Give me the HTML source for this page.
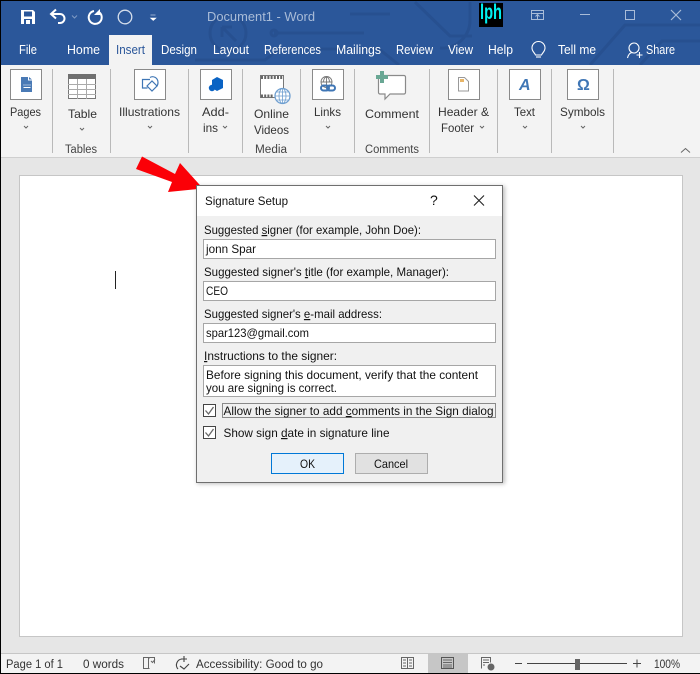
<!DOCTYPE html>
<html><head><meta charset="utf-8"><title>Signature Setup</title>
<style>
html,body{margin:0;padding:0;background:#000;width:700px;height:674px;overflow:hidden}
svg{display:block}
text{font-family:"Liberation Sans",sans-serif;font-size:12px;fill:#222}
.t{fill:#fff;font-size:12.5px}
.d{fill:#111}
.r{fill:#333}
.ic{fill:none;stroke:#3f76b5;stroke-width:1.2}
.box{fill:#fff;stroke:#8a8a8a;stroke-width:1}
.ch{fill:none;stroke:#666;stroke-width:1}
.f{fill:#fff;stroke:#a6a6a6;stroke-width:1}
.sep{stroke:#b9b9b9;stroke-width:1}
</style></head><body>
<svg width="700" height="674" viewBox="0 0 700 674" xmlns="http://www.w3.org/2000/svg">
<defs><filter id="s" x="-5%" y="-5%" width="110%" height="110%"><feGaussianBlur stdDeviation="2"/></filter></defs>
<rect width="700" height="674" fill="#000"/>
<rect x="1" y="1" width="699" height="64" fill="#2b579a"/>
<g fill="none" stroke="#275090" stroke-width="3">
<circle cx="228" cy="33" r="18"/><path d="M222 27h10M222 27v10M222 27l14 14"/>
<path d="M274 33h90M195 60h70l14-11h100l20 16"/><circle cx="274" cy="33" r="3"/>
<path d="M415 2l35 34h22M350 14h40M470 2v18a28 28 0 0 1-30 28"/>
<path d="M590 65l35-40h75M640 65l22-24h38"/>
</g>
<!-- QAT -->
<path d="M21 10h12l2 2v12H21z" fill="#fff"/>
<rect x="24" y="11.500" width="8" height="5" fill="#2b579a"/><rect x="24" y="19" width="8" height="5" fill="#2b579a"/><rect x="26" y="20" width="4" height="4" fill="#fff"/>
<g fill="none" stroke="#fff" stroke-width="2">
<path d="M52 14h8a4.500 4.500 0 0 1 0 9h-2"/><path d="M56 9.500l-5 4.500 5 4.500"/>
<path d="M99.500 12.500a6.500 6.500 0 1 1-5.500-1.500"/>
</g>
<path d="M100 9v6h-6z" fill="#fff"/>
<path d="M72 15.500l2.500 2.500 2.500-2.500" fill="none" stroke="#7f9ac4"/>
<circle cx="125" cy="17" r="6.800" fill="none" stroke="#d5deeb" stroke-width="1.300"/>
<path d="M150.500 15h5M150.500 18h5.500l-2.750 2.500z" fill="#fff" stroke="#fff" stroke-width=".6"/>
<text x="207" y="21" textLength="108" lengthAdjust="spacingAndGlyphs" style="fill:#a9bcd8;font-size:12.500px">Document1  -  Word</text>
<!-- logo -->
<rect x="479" y="3" width="24" height="24" fill="#000"/>
<text x="480" y="19" textLength="22" lengthAdjust="spacingAndGlyphs" style="fill:#00f0f0;font-size:21px;font-weight:bold">lph</text>
<!-- window controls -->
<g fill="none" stroke="#a9bcd8" stroke-width="1">
<rect x="531.500" y="10.500" width="12" height="9"/><path d="M531.500 13.500h12M537.500 19v-4M535.500 16.500l2-2 2 2"/>
<path d="M580 14.500h10"/><rect x="625.500" y="10.500" width="9" height="9"/>
<path d="M671 10l10 10M681 10l-10 10" stroke-width="1.200"/></g>
<!-- tabs -->
<rect x="109" y="35" width="43" height="31" fill="#f3f3f3"/>
<text class="t" x="19" y="54" textLength="18" lengthAdjust="spacingAndGlyphs">File</text>
<text class="t" x="67" y="54" textLength="33" lengthAdjust="spacingAndGlyphs">Home</text>
<text x="116" y="54" textLength="29" lengthAdjust="spacingAndGlyphs" style="fill:#2b579a;font-size:12.500px">Insert</text>
<text class="t" x="161" y="54" textLength="36" lengthAdjust="spacingAndGlyphs">Design</text>
<text class="t" x="213" y="54" textLength="36" lengthAdjust="spacingAndGlyphs">Layout</text>
<text class="t" x="264" y="54" textLength="57" lengthAdjust="spacingAndGlyphs">References</text>
<text class="t" x="336" y="54" textLength="45" lengthAdjust="spacingAndGlyphs">Mailings</text>
<text class="t" x="396" y="54" textLength="37" lengthAdjust="spacingAndGlyphs">Review</text>
<text class="t" x="448" y="54" textLength="25" lengthAdjust="spacingAndGlyphs">View</text>
<text class="t" x="488" y="54" textLength="25" lengthAdjust="spacingAndGlyphs">Help</text>
<text class="t" x="558" y="54" textLength="38" lengthAdjust="spacingAndGlyphs">Tell me</text>
<text class="t" x="646" y="54" textLength="29" lengthAdjust="spacingAndGlyphs">Share</text>
<g fill="none" stroke="#fff" stroke-width="1.100">
<path d="M535.500 55c-1-2.500-3.500-3.500-3.500-7a6.500 6.500 0 0 1 13 0c0 3.500-2.500 4.500-3.500 7z"/><path d="M536 57h5"/>
<circle cx="634" cy="48" r="5"/><path d="M627.500 58c1-4 3-5.500 5-5.500M636.500 55h6M639.500 52v6"/>
</g>
<!-- ribbon -->
<rect x="1" y="65" width="699" height="92" fill="#f3f3f3"/>
<rect x="1" y="157" width="699" height="1" fill="#cfcfcf"/>
<g class="sep"><path d="M52.500 69v84M110.500 69v84M188.500 69v84M242.500 69v84M300.500 69v84M354.500 69v84M429.500 69v84M497.500 69v84M551.500 69v84M613.500 69v84"/></g>
<rect class="box" x="10.500" y="69.500" width="31" height="30"/>
<rect class="box" x="134.500" y="69.500" width="31" height="30"/>
<rect class="box" x="200.500" y="69.500" width="31" height="30"/>
<rect class="box" x="312.500" y="69.500" width="31" height="30"/>
<rect class="box" x="448.500" y="69.500" width="31" height="30"/>
<rect class="box" x="509.500" y="69.500" width="31" height="30"/>
<rect class="box" x="567.500" y="69.500" width="31" height="30"/>
<!-- pages -->
<path d="M21 77h7v3.500h4V92H21z" fill="#4a7ab5"/><path d="M29 77l3 2.500h-3z" fill="#4a7ab5"/><path d="M23.500 85h7" stroke="#fff" stroke-dasharray="1 1"/><path d="M23.500 87.500h7" stroke="#fff"/>
<!-- table -->
<rect x="68.500" y="74.500" width="27" height="24" fill="#fff" stroke="#777"/><rect x="68" y="74" width="28" height="5" fill="#6f6f6f"/>
<path d="M77.500 79v20M86.500 79v20M68 84.500h28M68 89.500h28M68 94.500h28" stroke="#aaa" fill="none"/>
<!-- illustrations -->
<g class="ic"><path d="M150 79.500h-7.500v8.500h5"/><path d="M150 77.500c3-2 8 0 8 5 0 2-.5 3-1.500 4"/><path d="M147 86l5-5 5 5-5 5z"/></g>
<!-- add-ins -->
<path d="M217 77l6 3v8l-6 3-5-3v-8z" fill="#0a63c4"/><circle cx="212" cy="88" r="3.200" fill="#0a63c4"/>
<!-- video -->
<rect x="260.500" y="75.500" width="23" height="22" fill="#fff" stroke="#777"/>
<path d="M261 77.500h22M261 96h12" stroke="#666" stroke-width="3" stroke-dasharray="2 1.200" fill="none"/>
<circle cx="282.500" cy="96" r="7.500" fill="#fff" stroke="#6f9fd0" stroke-width="1.300"/>
<path d="M275 96h15M277 92h11M277 100h11M282.500 88.500v15M279 96c0-5 2-7.500 3.500-7.500s3.500 2.500 3.500 7.500-2 7.500-3.500 7.500-3.500-2.500-3.500-7.500" fill="none" stroke="#6f9fd0" stroke-width=".8"/>
<!-- links -->
<g fill="none" stroke="#777" stroke-width=".9"><circle cx="326.500" cy="82" r="5.500"/><path d="M321 82h11M326.500 76.500v11M323.500 82c0-3 1.500-5 3-5s3 2 3 5"/></g>
<g fill="none" stroke="#3f76b5" stroke-width="2"><rect x="321" y="85.500" width="8" height="5" rx="2.500"/><rect x="327" y="85.500" width="8" height="5" rx="2.500"/></g>
<!-- comment -->
<path d="M380 75.500h24a1.500 1.500 0 0 1 1.500 1.500v15.500a1.500 1.500 0 0 1-1.500 1.500h-14l-5 5v-5H380a1.500 1.500 0 0 1-1.500-1.500V78" fill="#fff" stroke="#8a8a8a" stroke-width="1.200"/>
<path d="M382 71v12M376 77h12" stroke="#69a794" stroke-width="4" fill="none"/>
<!-- header -->
<path d="M458.500 77.500h6l4 4v9.500h-10z" fill="#fff" stroke="#999"/><rect x="460" y="79" width="4" height="3" fill="#e8b567"/>
<!-- text A, omega -->
<text x="519" y="90" style="fill:#3f76b5;font-size:16px;font-weight:bold;font-style:italic">A</text>
<text x="577" y="90" style="fill:#3f76b5;font-size:16px;font-weight:bold">Ω</text>
<!-- ribbon labels -->
<text class="r" x="10" y="116" textLength="31" lengthAdjust="spacingAndGlyphs">Pages</text>
<text class="r" x="68" y="118" textLength="29" lengthAdjust="spacingAndGlyphs">Table</text>
<text class="r" x="119" y="116" textLength="61" lengthAdjust="spacingAndGlyphs">Illustrations</text>
<text class="r" x="202" y="116" textLength="27" lengthAdjust="spacingAndGlyphs">Add-</text>
<text class="r" x="203" y="132" textLength="15" lengthAdjust="spacingAndGlyphs">ins</text>
<text class="r" x="254" y="118" textLength="35" lengthAdjust="spacingAndGlyphs">Online</text>
<text class="r" x="254" y="134" textLength="35" lengthAdjust="spacingAndGlyphs">Videos</text>
<text class="r" x="314" y="116" textLength="27" lengthAdjust="spacingAndGlyphs">Links</text>
<text class="r" x="365" y="118" textLength="54" lengthAdjust="spacingAndGlyphs">Comment</text>
<text class="r" x="438" y="116" textLength="51" lengthAdjust="spacingAndGlyphs">Header &amp;</text>
<text class="r" x="441" y="132" textLength="33" lengthAdjust="spacingAndGlyphs">Footer</text>
<text class="r" x="514" y="116" textLength="21" lengthAdjust="spacingAndGlyphs">Text</text>
<text class="r" x="560" y="116" textLength="45" lengthAdjust="spacingAndGlyphs">Symbols</text>
<text x="65" y="153" textLength="32" lengthAdjust="spacingAndGlyphs" style="fill:#444;font-size:11.500px">Tables</text>
<text x="255" y="153" textLength="32" lengthAdjust="spacingAndGlyphs" style="fill:#444;font-size:11.500px">Media</text>
<text x="365" y="153" textLength="54" lengthAdjust="spacingAndGlyphs" style="fill:#444;font-size:11.500px">Comments</text>
<g class="ch"><path d="M24 126l2 2 2-2M80 128l2 2 2-2M148 126l2 2 2-2M223 126l2 2 2-2M326 126l2 2 2-2M480 126l2 2 2-2M523 126l2 2 2-2M581 126l2 2 2-2M681 152.500l4.500-4 4.500 4"/></g>
<!-- doc area -->
<rect x="1" y="158" width="699" height="495" fill="#e6e6e6"/>
<rect x="19.500" y="175.500" width="663" height="461" fill="#fff" stroke="#c6c6c6"/>
<rect x="115" y="271" width="1" height="18" fill="#222"/>
<!-- dialog -->
<rect x="197" y="186" width="308" height="298" fill="#000" opacity=".25" filter="url(#s)"/>
<!-- arrow -->
<polygon points="142,156.500 136,169 172,182 168,192 203,188.500 180,163 175,174" fill="#fb0007"/>
<rect x="196.500" y="185.500" width="306" height="297" fill="#f0f0f0" stroke="#6f6f6f"/>
<rect x="197" y="186" width="305" height="30" fill="#fff"/>
<text class="d" x="205" y="205" textLength="83" lengthAdjust="spacingAndGlyphs">Signature Setup</text>
<text class="d" x="430" y="205" style="font-size:14px">?</text>
<path d="M474 195.500l10 10M484 195.500l-10 10" stroke="#222" stroke-width="1.100" fill="none"/>
<text class="d" x="204" y="234" textLength="217" lengthAdjust="spacingAndGlyphs">Suggested <tspan text-decoration="underline">s</tspan>igner (for example, John Doe):</text>
<rect class="f" x="203.500" y="239.500" width="292" height="19"/>
<text class="d" x="206" y="253" textLength="50" lengthAdjust="spacingAndGlyphs">jonn Spar</text>
<text class="d" x="204" y="276" textLength="245" lengthAdjust="spacingAndGlyphs">Suggested signer's <tspan text-decoration="underline">t</tspan>itle (for example, Manager):</text>
<rect class="f" x="203.500" y="281.500" width="292" height="19"/>
<text class="d" x="206" y="295" textLength="22" lengthAdjust="spacingAndGlyphs">CEO</text>
<text class="d" x="204" y="318" textLength="178" lengthAdjust="spacingAndGlyphs">Suggested signer's <tspan text-decoration="underline">e</tspan>-mail address:</text>
<rect class="f" x="203.500" y="323.500" width="292" height="19"/>
<text class="d" x="206" y="337" textLength="103" lengthAdjust="spacingAndGlyphs">spar123@gmail.com</text>
<text class="d" x="204" y="360" textLength="133" lengthAdjust="spacingAndGlyphs"><tspan text-decoration="underline">I</tspan>nstructions to the signer:</text>
<rect class="f" x="203.500" y="365.500" width="292" height="31"/>
<text class="d" x="206" y="379" textLength="272" lengthAdjust="spacingAndGlyphs">Before signing this document, verify that the content</text>
<text class="d" x="206" y="392" textLength="131" lengthAdjust="spacingAndGlyphs">you are signing is correct.</text>
<rect x="203.500" y="404.500" width="12" height="12" fill="#fff" stroke="#444"/>
<path d="M205.500 410.500l3 3.500 5-7" fill="none" stroke="#666" stroke-width="1.300"/>
<rect x="222.500" y="403.500" width="273" height="14" fill="none" stroke="#222" stroke-dasharray="1 1"/>
<text class="d" x="223.500" y="415" textLength="270" lengthAdjust="spacingAndGlyphs">Allow the signer to add <tspan text-decoration="underline">c</tspan>omments in the Sign dialog</text>
<rect x="203.500" y="426.500" width="12" height="12" fill="#fff" stroke="#444"/>
<path d="M205.500 432.500l3 3.500 5-7" fill="none" stroke="#666" stroke-width="1.300"/>
<text class="d" x="223.500" y="437" textLength="166" lengthAdjust="spacingAndGlyphs">Show sign <tspan text-decoration="underline">d</tspan>ate in signature line</text>
<rect x="271.500" y="453.500" width="72" height="20" fill="#e5f1fb" stroke="#0078d7"/>
<text class="d" x="300" y="468" textLength="15" lengthAdjust="spacingAndGlyphs">OK</text>
<rect x="355.500" y="453.500" width="72" height="20" fill="#e1e1e1" stroke="#adadad"/>
<text class="d" x="374" y="468" textLength="34" lengthAdjust="spacingAndGlyphs">Cancel</text>
<!-- status bar -->
<rect x="1" y="653" width="699" height="20" fill="#f3f3f3"/>
<rect x="1" y="653" width="699" height="1" fill="#c6c6c6"/>
<text class="r" x="6" y="668" textLength="57" lengthAdjust="spacingAndGlyphs" style="font-size:11.500px">Page 1 of 1</text>
<text class="r" x="83" y="668" textLength="41" lengthAdjust="spacingAndGlyphs" style="font-size:11.500px">0 words</text>
<g fill="none" stroke="#666" stroke-width="1"><path d="M148.500 668.500h-5v-11h5v11h1M148.500 659l1-1.500h5v6M151 661l1.500 1.500 2.500-3"/></g>
<g fill="none" stroke="#444" stroke-width="1.100"><path d="M182 659a6 6 0 0 0-4 10M184 656v6M181 659h6M180 666l4 3 5-5"/></g>
<text class="r" x="196" y="668" textLength="127" lengthAdjust="spacingAndGlyphs" style="font-size:11.500px">Accessibility: Good to go</text>
<rect x="428" y="654" width="40" height="19" fill="#c6c6c6"/>
<g fill="none" stroke="#666" stroke-width="1">
<rect x="401.500" y="657.500" width="12" height="11"/><path d="M407.500 657.500v11M403 660h3M403 663h3M403 666h3M409 660h3M409 663h3M409 666h3"/>
<rect x="441.500" y="657.500" width="12" height="11" stroke="#555"/><path d="M443 660h9M443 662.500h9M443 665h9M443 667h9"/>
<path d="M481.500 668.500v-11h9v5M483 660h6M483 662.500h6M483 665h2"/></g>
<circle cx="491" cy="667" r="3.500" fill="#666"/>
<path d="M515 663.500h7M527 663.500h100M633 663.500h8M637 659.500v8" stroke="#444" fill="none"/>
<rect x="575" y="659" width="5" height="11" fill="#666"/>
<text class="r" x="654" y="668" textLength="26" lengthAdjust="spacingAndGlyphs" style="font-size:11.500px">100%</text>
</svg>
</body></html>
